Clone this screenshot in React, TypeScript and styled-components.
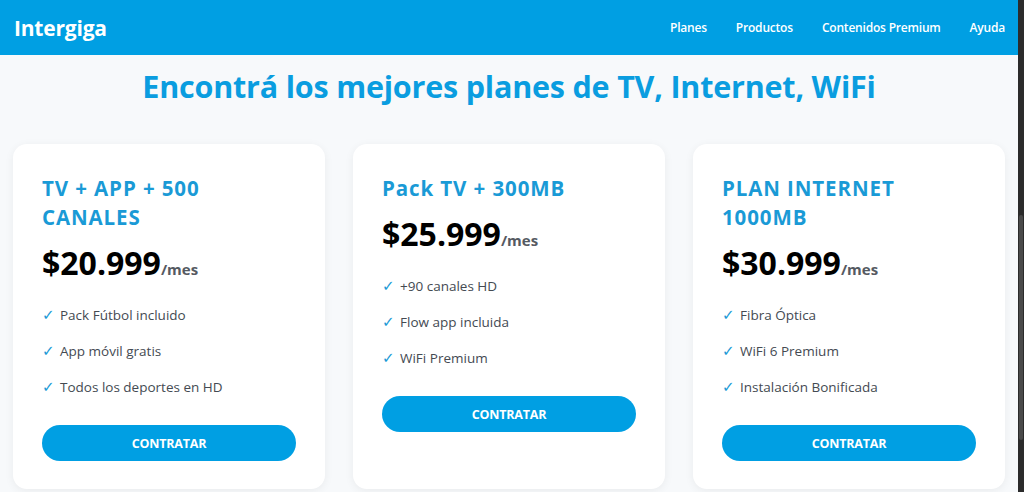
import React from "react";
import styled, { createGlobalStyle } from "styled-components";

const plans = [
  {
    title: "TV + APP + 500 CANALES",
    price: "$20.999",
    features: ["Pack Fútbol incluido", "App móvil gratis", "Todos los deportes en HD"],
  },
  {
    title: "Pack TV + 300MB",
    price: "$25.999",
    features: ["+90 canales HD", "Flow app incluida", "WiFi Premium"],
  },
  {
    title: "PLAN INTERNET 1000MB",
    price: "$30.999",
    features: ["Fibra Óptica", "WiFi 6 Premium", "Instalación Bonificada"],
  },
];

const navLinks = ["Planes", "Productos", "Contenidos Premium", "Ayuda"];

export default function App() {
  return (
    <>
      <GlobalStyle />
      <Page>
        <Content>
          <Header>
            <Logo>Intergiga</Logo>
            <Nav>
              {navLinks.map((link) => (
                <NavLink key={link}>{link}</NavLink>
              ))}
            </Nav>
          </Header>

          <Main>
            <Heading>Encontrá los mejores planes de TV, Internet, WiFi</Heading>

            <PlanGrid>
              {plans.map((plan) => (
                <PlanCard key={plan.title}>
                  <PlanTitle>{plan.title}</PlanTitle>
                  <PlanPrice>
                    {plan.price}
                    <PlanPeriod>/mes</PlanPeriod>
                  </PlanPrice>
                  <FeatureList>
                    {plan.features.map((feature) => (
                      <FeatureItem key={feature}>
                        <Check>✓</Check>
                        {feature}
                      </FeatureItem>
                    ))}
                  </FeatureList>
                  <HireButton>CONTRATAR</HireButton>
                </PlanCard>
              ))}
            </PlanGrid>
          </Main>
        </Content>
        {/* the browser's dark scrollbar rail */}
        <ScrollRail>
          <ScrollThumb />
        </ScrollRail>
      </Page>
    </>
  );
}

const GlobalStyle = createGlobalStyle`
  * {
    box-sizing: border-box;
  }

  body {
    margin: 0;
    font-family: "Open Sans", "Noto Sans", sans-serif;
    background: #f7f9fb;
  }
`;

const Page = styled.div`
  height: 100vh;
  overflow: hidden;

  display: flex;

  background: #f7f9fb;
`;

const Content = styled.div`
  flex: 1;
  min-width: 0;
`;

const ScrollRail = styled.div`
  width: 6px;
  padding: 215px 0 0;

  background: #2b2b2b;
`;

const ScrollThumb = styled.div`
  height: 225px;
  margin: 0 1px;

  border-radius: 2px;
  background: #4a4a4a;
`;

const Header = styled.header`
  height: 55px;
  padding: 0 13px 0 14px;

  display: flex;
  align-items: center;
  justify-content: space-between;

  background: #009fe3;
  color: #fff;
`;

const Logo = styled.div`
  font-size: 21px;
  font-weight: 700;
  letter-spacing: -0.2px;
`;

const Nav = styled.nav`
  display: flex;
  gap: 29px;
`;

const NavLink = styled.a`
  font-size: 12px;
  font-weight: 600;
  letter-spacing: -0.2px;
  color: #fff;
  cursor: pointer;
`;

const Main = styled.main`
  padding: 12px 13px 40px;
`;

const Heading = styled.h1`
  margin: 0 0 39px;

  font-size: 30.5px;
  line-height: 38px;
  font-weight: 700;
  letter-spacing: -0.2px;
  text-align: center;
  color: #0a9de0;
`;

const PlanGrid = styled.div`
  display: grid;
  grid-template-columns: repeat(3, 1fr);
  gap: 28px;
`;

const PlanCard = styled.div`
  padding: 30px 29px 28px;

  display: flex;
  flex-direction: column;

  background: #fff;
  border-radius: 14px;
  box-shadow: 0 2px 10px rgba(0, 0, 0, 0.06);
`;

const PlanTitle = styled.h3`
  margin: 0;
  max-width: 200px;

  font-size: 20.5px;
  line-height: 29px;
  font-weight: 700;
  letter-spacing: 0.9px;
  color: #1a9ad6;
`;

const PlanPrice = styled.div`
  margin-top: 12px;

  font-size: 32px;
  line-height: 38px;
  font-weight: 700;
  letter-spacing: 0;
  color: #000;
`;

const PlanPeriod = styled.span`
  font-size: 15px;
  font-weight: 700;
  color: #555a62;
`;

const FeatureList = styled.ul`
  margin: 9px 0 20px;
  padding: 0;
  list-style: none;
`;

const FeatureItem = styled.li`
  padding: 8px 0;

  display: flex;
  align-items: center;
  gap: 6px;

  font-size: 13.5px;
  line-height: 20px;
  color: #444a52;
`;

const Check = styled.span`
  width: 12px;

  font-family: "DejaVu Sans", sans-serif;
  font-size: 15px;
  color: #1a9ad6;
`;

const HireButton = styled.button`
  height: 36px;
  width: 100%;

  border: none;
  border-radius: 18px;
  background: #009fe3;

  font-family: inherit;
  font-size: 12.5px;
  font-weight: 700;
  letter-spacing: -0.2px;
  color: #fff;
  cursor: pointer;
`;
